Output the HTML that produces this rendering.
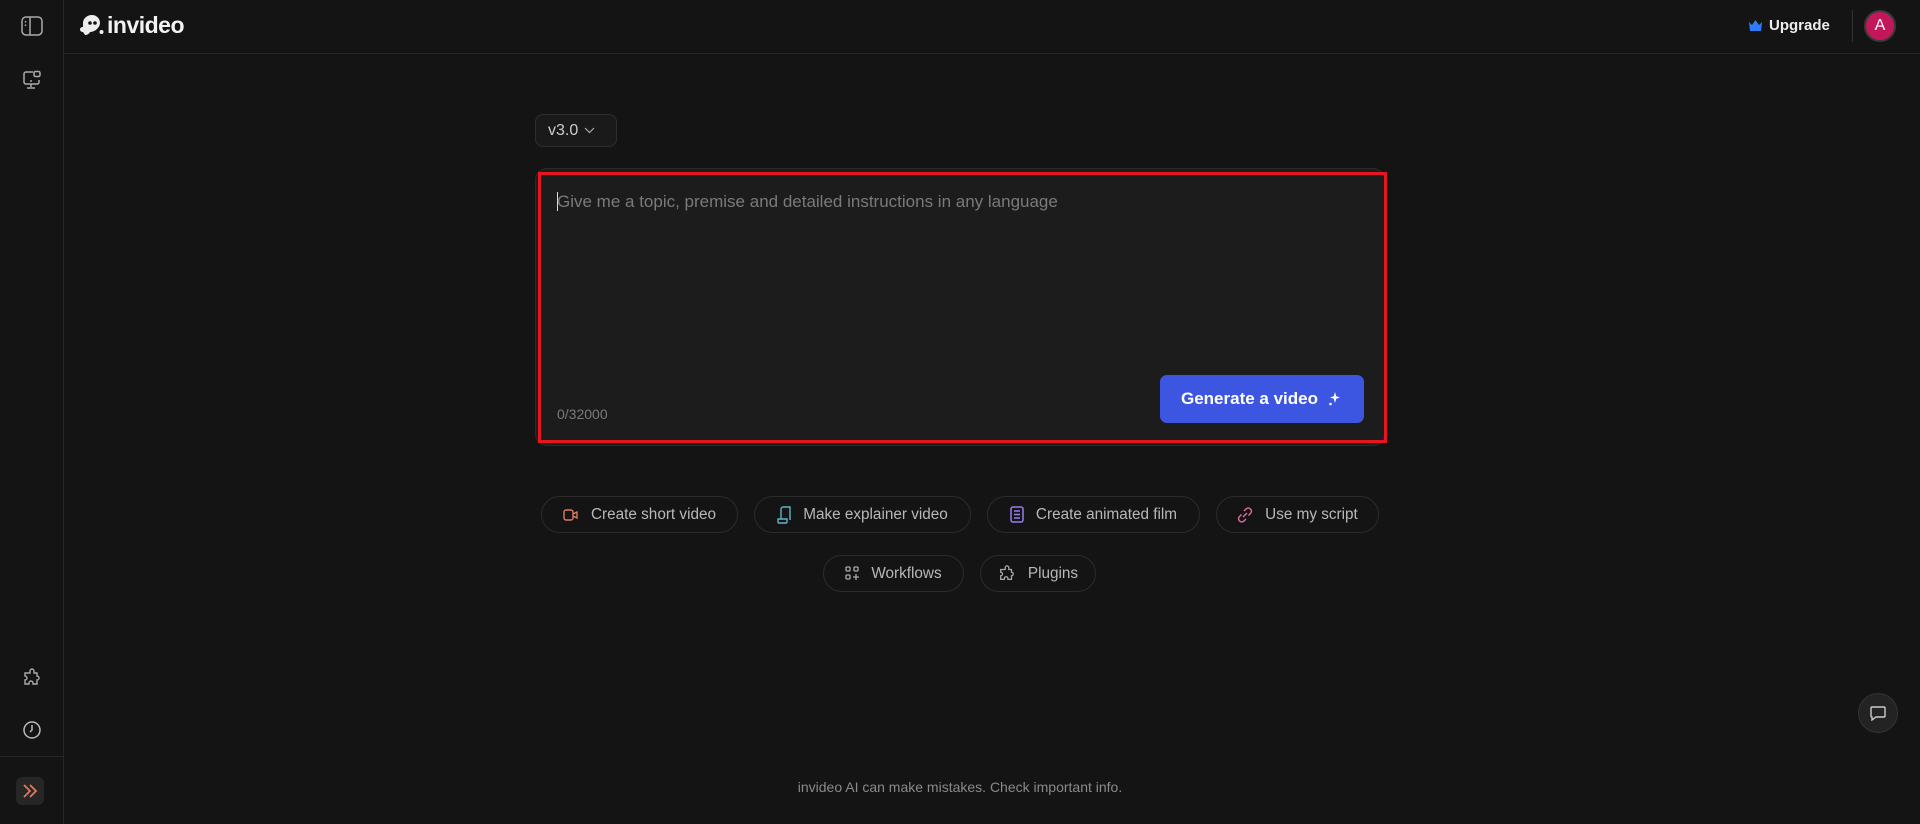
<!DOCTYPE html>
<html><head><meta charset="utf-8"><style>
*{box-sizing:border-box;margin:0;padding:0}
body{width:1920px;height:824px;background:#141414;font-family:"Liberation Sans",sans-serif;color:#ddd;position:relative;overflow:hidden}
.side{position:absolute;left:0;top:0;width:64px;height:824px;border-right:1px solid #262626}
.hdr{position:absolute;left:64px;top:0;right:0;height:54px;border-bottom:1px solid #262626}
.abs{position:absolute}
.chip{position:absolute;height:37px;border:1px solid #2c2c2c;border-radius:19px;display:flex;align-items:center;justify-content:center;gap:12px;font-size:15.3px;color:#b8b8b8}
</style></head><body>
<div class="side">
  <svg class="abs" style="left:21px;top:16px" width="22" height="20" viewBox="0 0 22 20" fill="none" stroke="#aaa" stroke-width="1.5"><rect x="1" y="1" width="20" height="18" rx="4"/><line x1="9" y1="1" x2="9" y2="19"/><line x1="4.5" y1="5" x2="4.5" y2="6.5"/><line x1="4.5" y1="8.5" x2="4.5" y2="10"/></svg>
  <svg class="abs" style="left:22px;top:70px" width="20" height="20" viewBox="0 0 20 20" fill="none" stroke="#aaa" stroke-width="1.5"><path d="M11 2H4a2 2 0 0 0-2 2v8a2 2 0 0 0 2 2h11a2 2 0 0 0 2-2v-2"/><rect x="12" y="1.5" width="6" height="5" rx="1.5"/><line x1="9" y1="14" x2="9" y2="17"/><line x1="5" y1="18" x2="13" y2="18"/><line x1="8" y1="11" x2="10" y2="11"/></svg>
  <svg class="abs" style="left:22px;top:668px" width="20" height="20" viewBox="0 0 20 20" fill="none" stroke="#aaa" stroke-width="1.4"><path d="M8 3a2 2 0 0 1 4 0v2h3v3a2 2 0 0 1 0 4v4h-4v-1a2 2 0 0 0-4 0v1H3v-4a2 2 0 0 0 0-4V5h5z"/></svg>
  <svg class="abs" style="left:22px;top:720px" width="20" height="20" viewBox="0 0 20 20" fill="none" stroke="#bbb" stroke-width="1.5"><circle cx="10" cy="10" r="8"/><path d="M10 5v5l-2 2"/></svg>
  <div style="position:absolute;left:0;top:756px;width:64px;border-top:1px solid #262626"></div>
  <div class="abs" style="left:16px;top:777px;width:28px;height:28px;border-radius:6px;background:#262626"></div>
  <svg class="abs" style="left:22px;top:784px" width="16" height="14" viewBox="0 0 16 14" fill="none" stroke="#e07a5f" stroke-width="1.8"><path d="M2 1l6 6-6 6M8 1l6 6-6 6"/></svg>
</div>
<div class="hdr"></div>
<svg class="abs" style="left:80px;top:14px" width="24" height="22" viewBox="0 0 24 22"><path d="M12 1c-5 0-9 3.5-9 8v4c-2 0-3 1-3 2.5S1.5 18 3 18l2 3c2 0 4-1 5-3 2 0 5-1 7-3 2-2 3-4 3-6 0-5-4-8-8-8z" fill="#eee"/><circle cx="10" cy="9" r="1.8" fill="#141414"/><circle cx="15" cy="9" r="1.8" fill="#141414"/><circle cx="21.5" cy="18" r="2" fill="#eee"/></svg>
<div class="abs" style="left:107px;top:12px;font-size:23px;font-weight:bold;color:#f2f2f2;letter-spacing:-0.5px">invideo</div>
<svg class="abs" style="left:1749px;top:20px" width="13" height="11" viewBox="0 0 13 11"><path d="M0 2l3 3 3.5-5 3.5 5 3-3-1 9H1z" fill="#2f7cf6"/></svg>
<div class="abs" style="left:1769px;top:17px;font-size:15px;font-weight:bold;color:#eee">Upgrade</div>
<div class="abs" style="left:1852px;top:10px;width:1px;height:32px;background:#333"></div>
<div class="abs" style="left:1864px;top:10px;width:32px;height:32px;border-radius:50%;background:#c2185b;border:2px solid #3a3a3a;color:#fff;font-size:16px;display:flex;align-items:center;justify-content:center">A</div>

<div class="abs" style="left:535px;top:114px;width:82px;height:33px;border:1px solid #2e2e2e;border-radius:8px;background:#1a1a1a;font-size:16px;color:#ccc;display:flex;align-items:center;padding-left:12px;white-space:nowrap">v3.0<svg style="margin-left:6px" width="11" height="7" viewBox="0 0 11 7" fill="none" stroke="#aaa" stroke-width="1.2"><path d="M1 1l4.5 4.5L10 1"/></svg></div>

<div class="abs" style="left:535px;top:168px;width:850px;height:278px;border:1px solid #2a2a2a;border-radius:12px;background:#1c1c1c"></div>
<div class="abs" style="left:538px;top:172px;width:849px;height:271px;border:3px solid #e8141f"></div>
<div class="abs" style="left:557px;top:192px;width:1px;height:19px;background:#ddd"></div>
<div class="abs" style="left:557px;top:192px;font-size:17px;color:#7a7a7a">Give me a topic, premise and detailed instructions in any language</div>
<div class="abs" style="left:557px;top:406px;font-size:14px;color:#7a7a7a">0/32000</div>
<div class="abs" style="left:1160px;top:375px;width:204px;height:48px;border-radius:7px;background:#3d56e2;color:#fff;font-size:17px;font-weight:bold;display:flex;align-items:center;padding-left:21px">Generate a video<svg style="margin-left:10px" width="12" height="14" viewBox="0 0 12 14"><path d="M7 0l1.2 4.3L12 5.5 8.2 6.7 7 11 5.8 6.7 2 5.5l3.8-1.2z" fill="#fff"/><circle cx="2.5" cy="12" r="1.3" fill="#fff"/></svg></div>

<div class="chip" style="left:541px;top:496px;width:197px"><svg width="16" height="14" viewBox="0 0 16 14" fill="none" stroke="#e07a5f" stroke-width="1.4"><rect x="1" y="2" width="9" height="10" rx="2"/><path d="M10 6l4-2v6l-4-2"/></svg>Create short video</div>
<div class="chip" style="left:754px;top:496px;width:217px"><svg width="14" height="18" viewBox="0 0 14 18" fill="none" stroke="#5fb3c9" stroke-width="1.4"><path d="M4 13V3a2 2 0 0 1 2-2h7v13M1 13h9v3a1 1 0 0 1-1 1H2a1 1 0 0 1-1-1z"/></svg>Make explainer video</div>
<div class="chip" style="left:987px;top:496px;width:213px"><svg width="14" height="17" viewBox="0 0 14 17" fill="none" stroke="#9a7cf0" stroke-width="1.5"><rect x="1" y="1" width="12" height="15" rx="2"/><path d="M4 5h6M4 8.5h6M4 12h6"/></svg>Create animated film</div>
<div class="chip" style="left:1216px;top:496px;width:163px"><svg width="16" height="16" viewBox="0 0 16 16" fill="none" stroke="#e06aa8" stroke-width="1.4"><path d="M7 4l2-2a3 3 0 0 1 4.5 4.5l-2 2M9 12l-2 2A3 3 0 0 1 2.5 9.5l2-2M6 10l4-4"/></svg>Use my script</div>
<div class="chip" style="left:823px;top:555px;width:141px"><svg width="14" height="15" viewBox="0 0 14 15" fill="none" stroke="#aaa" stroke-width="1.3"><rect x="1" y="1" width="4" height="4" rx="1"/><rect x="9" y="1" width="4" height="4" rx="1"/><rect x="1" y="9" width="4" height="4" rx="1"/><path d="M11 8v6M8 11h6"/></svg>Workflows</div>
<div class="chip" style="left:980px;top:555px;width:116px"><svg width="18" height="18" viewBox="0 0 20 20" fill="none" stroke="#aaa" stroke-width="1.4"><path d="M8 3a2 2 0 0 1 4 0v2h3v3a2 2 0 0 1 0 4v4h-4v-1a2 2 0 0 0-4 0v1H3v-4a2 2 0 0 0 0-4V5h5z"/></svg>Plugins</div>

<div class="abs" style="left:0;width:1920px;text-align:center;top:779px;font-size:14px;color:#8a8a8a">invideo AI can make mistakes. Check important info.</div>
<div class="abs" style="left:1858px;top:693px;width:40px;height:40px;border-radius:50%;background:#232323;border:1px solid #333;display:flex;align-items:center;justify-content:center"><svg width="16" height="15" viewBox="0 0 16 15" fill="none" stroke="#ccc" stroke-width="1.4"><path d="M2 1h12a1 1 0 0 1 1 1v8a1 1 0 0 1-1 1H6l-4 3v-3H2a1 1 0 0 1-1-1V2a1 1 0 0 1 1-1z"/></svg></div>
</body></html>
